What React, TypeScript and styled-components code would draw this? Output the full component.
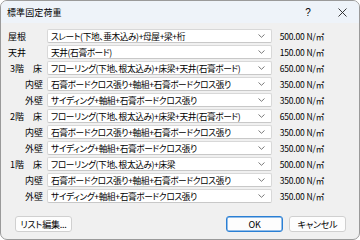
import React from "react";
import styled, {createGlobalStyle} from "styled-components";

const GlobalStyle = createGlobalStyle`
  html, body {
    margin: 0;
    padding: 0;
    background: #ffffff;
  }
  * {
    box-sizing: border-box;
  }
`;

const Window = styled.div`
  width: 360px;
  height: 240px;
  border: 1px solid #9a9a9a;
  border-radius: 7px;
  overflow: hidden;
  background: #f0f0f0;
  display: flex;
  flex-direction: column;
  font-family: "Noto Sans CJK JP", "Noto Sans", sans-serif;
  font-feature-settings: "palt";
  font-size: 9px;
  color: #000;
`;

const TitleBar = styled.div`
  height: 22px;
  background: #eef3f9;
  display: flex;
  align-items: center;
  padding-left: 6px;
`;

const Title = styled.span`
  flex: 1;
  font-size: 9px;
  letter-spacing: 0.1px;
`;

const TitleButton = styled.span`
  width: 34px;
  height: 22px;
  display: flex;
  align-items: center;
  justify-content: center;
  font-family: "Liberation Sans", sans-serif;
  font-size: 10px;
`;

const Body = styled.div`
  flex: 1;
  display: flex;
  flex-direction: column;
  padding: 6px 13px 7px 7px;
`;

const Grid = styled.div`
  display: grid;
  grid-template-columns: 35px 225px 48px;
  grid-auto-rows: 14px;
  column-gap: 4px;
  row-gap: 2px;
  align-items: center;
`;

const Label = styled.div<{$align?: "left" | "right" | "split"}>`
  display: flex;
  justify-content: ${(p) =>
    p.$align === "left"
      ? "flex-start"
      : p.$align === "split"
        ? "space-between"
        : "flex-end"};
  padding: ${(p) => (p.$align === "split" ? "0 1px 0 2px" : "0")};
  white-space: nowrap;
`;

const Combo = styled.div`
  height: 14px;
  background: #ffffff;
  border: 1px solid #d8d8d8;
  border-bottom-color: #c8c8c8;
  border-radius: 2px;
  display: flex;
  align-items: center;
  padding: 0 6px 0 3px;
`;

const ComboText = styled.span`
  flex: 1;
  font-size: 8.7px;
  letter-spacing: -0.4px;
  white-space: nowrap;
  overflow: hidden;
`;

const Value = styled.div`
  text-align: right;
  font-size: 8.5px;
  letter-spacing: -0.15px;
  white-space: nowrap;
`;

const Footer = styled.div`
  margin-top: auto;
  display: flex;
  align-items: center;
  padding-left: 7px;
`;

const Button = styled.button<{$primary?: boolean}>`
  width: 57px;
  height: 16px;
  padding: 0;
  background: #fdfdfd;
  border: 1px solid ${(p) => (p.$primary ? "#2a7fd4" : "#d0d0d0")};
  box-shadow: ${(p) => (p.$primary ? "inset 0 0 0 0.5px #2a7fd4" : "none")};
  border-radius: 3px;
  font-family: inherit;
  font-feature-settings: "palt";
  font-size: 9px;
  letter-spacing: -0.2px;
  color: #000;
  & + & {
    margin-left: 6px;
  }
`;

const Spacer = styled.div`
  flex: 1;
`;

const Chevron = () => (
  <svg width="7" height="4" viewBox="0 0 7 4">
    <path d="M0.5 0.5 L3.5 3.3 L6.5 0.5" fill="none" stroke="#6b6b6b" strokeWidth="0.9" />
  </svg>
);

const CloseIcon = () => (
  <svg width="9" height="9" viewBox="0 0 9 9">
    <path d="M0.5 0.5 L8.5 8.5 M8.5 0.5 L0.5 8.5" stroke="#222" strokeWidth="0.9" />
  </svg>
);

type Row = {
  label: React.ReactNode;
  align: "left" | "right" | "split";
  value: string;
  load: string;
};

const floor = (n: string) => (
  <>
    <span>{n}階</span>
    <span>床</span>
  </>
);

const rows: Row[] = [
  {label: "屋根", align: "left", value: "スレート(下地、垂木込み)+母屋+梁+桁", load: "500.00"},
  {label: "天井", align: "left", value: "天井(石膏ボード)", load: "150.00"},
  {label: floor("3"), align: "split", value: "フローリング(下地、根太込み)+床梁+天井(石膏ボード)", load: "650.00"},
  {label: "内壁", align: "right", value: "石膏ボードクロス張り+軸組+石膏ボードクロス張り", load: "350.00"},
  {label: "外壁", align: "right", value: "サイディング+軸組+石膏ボードクロス張り", load: "350.00"},
  {label: floor("2"), align: "split", value: "フローリング(下地、根太込み)+床梁+天井(石膏ボード)", load: "650.00"},
  {label: "内壁", align: "right", value: "石膏ボードクロス張り+軸組+石膏ボードクロス張り", load: "350.00"},
  {label: "外壁", align: "right", value: "サイディング+軸組+石膏ボードクロス張り", load: "350.00"},
  {label: floor("1"), align: "split", value: "フローリング(下地、根太込み)+床梁", load: "500.00"},
  {label: "内壁", align: "right", value: "石膏ボードクロス張り+軸組+石膏ボードクロス張り", load: "350.00"},
  {label: "外壁", align: "right", value: "サイディング+軸組+石膏ボードクロス張り", load: "350.00"},
];

export default function App() {
  return (
    <>
      <GlobalStyle />
      <Window>
        <TitleBar>
          <Title>標準固定荷重</Title>
          <TitleButton>?</TitleButton>
          <TitleButton>
            <CloseIcon />
          </TitleButton>
        </TitleBar>
        <Body>
          <Grid>
            {rows.map((r, i) => (
              <React.Fragment key={i}>
                <Label $align={r.align}>{r.label}</Label>
                <Combo>
                  <ComboText>{r.value}</ComboText>
                  <Chevron />
                </Combo>
                <Value>{r.load} N/㎡</Value>
              </React.Fragment>
            ))}
          </Grid>
          <Footer>
            <Button>リスト編集...</Button>
            <Spacer />
            <Button $primary>OK</Button>
            <Button>キャンセル</Button>
          </Footer>
        </Body>
      </Window>
    </>
  );
}
